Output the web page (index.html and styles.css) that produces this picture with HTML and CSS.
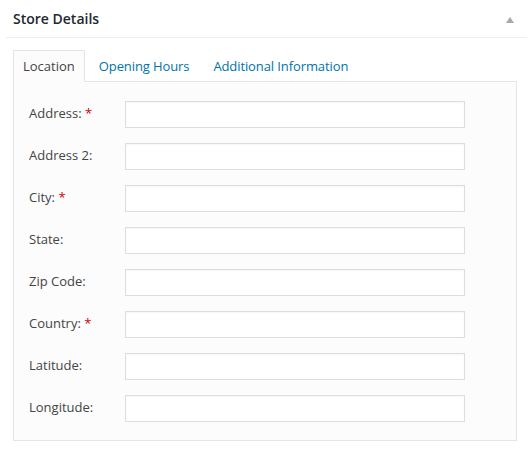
FILE: index.html
```html
<!DOCTYPE html>
<html>
<head>
<meta charset="utf-8">
<link rel="stylesheet" href="styles.css">
</head>
<body>
<div class="postbox">
  <div class="postbox-header">
    <h2 class="postbox-title">Store Details</h2>
    <span class="toggle-arrow"></span>
  </div>
  <div class="inside">
    <ul class="tabs">
      <li class="tab active">Location</li>
      <li class="tab"><a href="#">Opening Hours</a></li>
      <li class="tab"><a href="#">Additional Information</a></li>
    </ul>
    <div class="panel">
      <div class="field"><label>Address: <span class="req">*</span></label><input type="text"></div>
      <div class="field"><label>Address 2:</label><input type="text"></div>
      <div class="field"><label>City: <span class="req">*</span></label><input type="text"></div>
      <div class="field"><label>State:</label><input type="text"></div>
      <div class="field"><label>Zip Code:</label><input type="text"></div>
      <div class="field"><label>Country: <span class="req">*</span></label><input type="text"></div>
      <div class="field"><label>Latitude:</label><input type="text"></div>
      <div class="field"><label>Longitude:</label><input type="text"></div>
    </div>
  </div>
</div>
</body>
</html>
```
FILE: styles.css
```css
html, body {
  margin: 0;
  padding: 0;
  background: #fff;
}
body {
  font-family: "Open Sans", "Liberation Sans", sans-serif;
  font-size: 13px;
  color: #444;
}
.postbox {
  margin: 0 3px 0 6px;
  background: #fff;
}
.postbox-header {
  display: flex;
  align-items: center;
  justify-content: space-between;
  height: 37px;
  border-bottom: 1px solid #eee;
  padding: 0 13px 0 7px;
}
.postbox-title {
  margin: 0;
  font-size: 14px;
  font-weight: 600;
  color: #23282d;
  line-height: 1;
}
.toggle-arrow {
  width: 0;
  height: 0;
  border-left: 4px solid transparent;
  border-right: 4px solid transparent;
  border-bottom: 6px solid #a8a8a8;
  margin-top: 2px;
}
.inside {
  padding: 12px 10px 0 7px;
}
.tabs {
  list-style: none;
  margin: 0;
  padding: 0;
  display: flex;
  gap: 4px;
  height: 31px;
}
.tab {
  padding: 0 9px;
  border: 1px solid transparent;
  border-bottom: none;
  line-height: 30px;
  height: 31px;
  box-sizing: border-box;
  position: relative;
}
.tab a {
  color: #0073aa;
  text-decoration: none;
  letter-spacing: -0.1px;
}
.tab.active {
  background: #fcfcfc;
  border-color: #e5e5e5;
  color: #444;
  height: 32px;
  z-index: 1;
}
.panel {
  background: #fcfcfc;
  border: 1px solid #e5e5e5;
  padding: 19px 15px 18px;
  display: flex;
  flex-direction: column;
  gap: 15px;
}
.field {
  display: flex;
  align-items: center;
  height: 27px;
}
.field label {
  width: 96px;
  flex: none;
  color: #444;
  padding-bottom: 4px;
}
.req {
  color: #c00;
}
.field input {
  width: 340px;
  height: 27px;
  box-sizing: border-box;
  border: 1px solid #ddd;
  background: #fff;
  margin: 0;
  padding: 3px 5px;
  box-shadow: inset 0 1px 2px rgba(0,0,0,0.04);
  font-family: inherit;
  font-size: 13px;
}
```
